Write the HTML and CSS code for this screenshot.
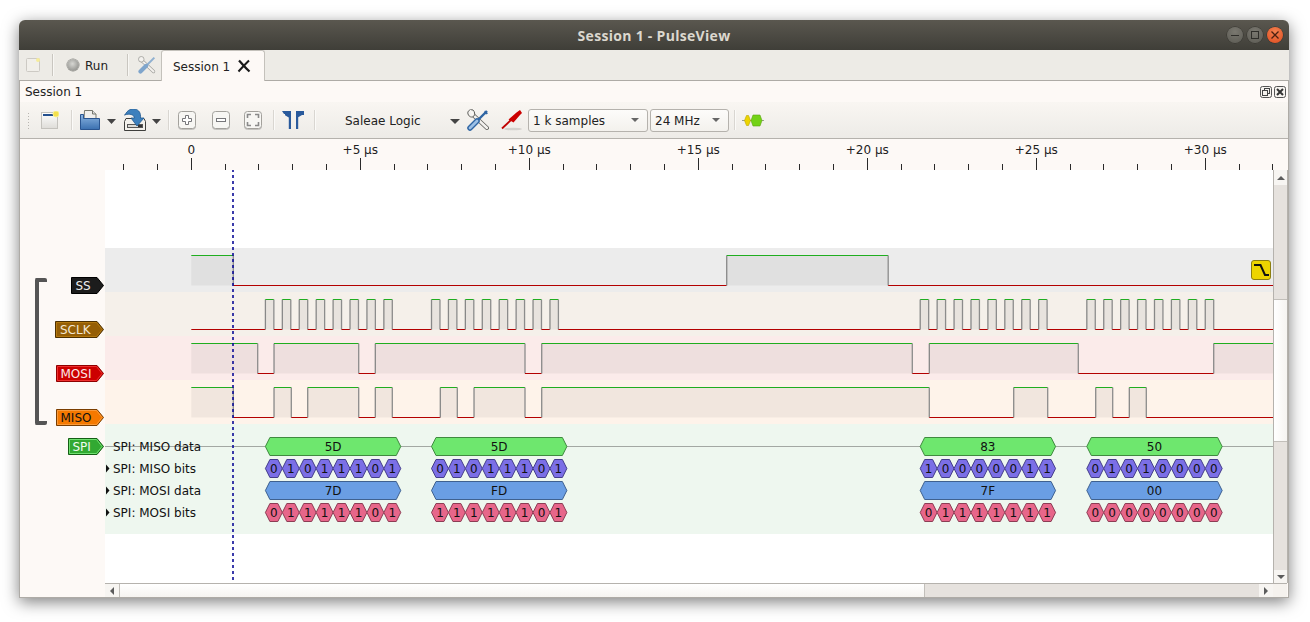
FILE: index.html
```html
<!DOCTYPE html>
<html lang="en">
<head>
    <meta charset="UTF-8">
    <title>Session 1 - PulseView</title>
    <meta name="viewport" content="width=device-width, initial-scale=1.0">
    <link rel="stylesheet" href="styles.css">
</head>
<body>
    <div class="window">
        <div class="titlebar">
            <span class="title">Session 1 - PulseView</span>
            <div class="wm-buttons">
                <span class="wm-btn"><i class="wm-min"></i></span>
                <span class="wm-btn"><i class="wm-max"></i></span>
                <span class="wm-btn wm-close">
                    <svg width="10" height="10" viewBox="0 0 10 10"><path d="M1.5 1.5l7 7M8.5 1.5l-7 7" stroke="#4a2010" stroke-width="1.3"/></svg>
                </span>
            </div>
        </div>

        <div class="tabbar">
            <svg class="tab-new" width="14" height="14" viewBox="0 0 14 14">
                <rect x="0.5" y="0.5" width="13" height="13" rx="1" fill="#f1efea" stroke="#cdcac4"/>
                <circle cx="12" cy="2" r="2" fill="#f6ec9a"/>
            </svg>
            <span class="tab-sep"></span>
            <span class="run-led"></span>
            <span class="run-label">Run</span>
            <span class="tab-sep tab-sep-tight"></span>
            <svg class="tab-tools" width="18" height="18" viewBox="0 0 22 22">
                <path d="M3 4l16 15" stroke="#a0a09c" stroke-width="4" stroke-linecap="round"/>
                <path d="M3 4l16 15" stroke="#f3f1ee" stroke-width="2.4" stroke-linecap="round"/>
                <circle cx="4" cy="4" r="3.4" fill="#f3f1ee" stroke="#a0a09c"/>
                <path d="M20 2l-9 9" stroke="#8fb0d0" stroke-width="2.4"/>
                <path d="M10 12l-7 7" stroke="#7fa5cc" stroke-width="5" stroke-linecap="round"/>
            </svg>
            <div class="tab">
                <span>Session 1</span>
                <svg class="tab-close" width="14" height="14" viewBox="0 0 14 14">
                    <path d="M2 1.5c3 3 6 7 10.500 11" stroke="#1a1a1a" stroke-width="2.300" fill="none"/>
                    <path d="M12 1.500c-3 3-7 7-10.500 11" stroke="#1a1a1a" stroke-width="2" fill="none"/>
                </svg>
            </div>
        </div>

        <div class="dock">
            <div class="dock-title">
                <span>Session 1</span>
                <div class="dock-btns">
                    <svg width="12" height="12" viewBox="0 0 12 12">
                        <rect x="0.500" y="0.500" width="11" height="11" rx="2" fill="#f6f3ef" stroke="#555"/>
                        <rect x="4.500" y="2.500" width="5" height="5" fill="none" stroke="#444"/>
                        <rect x="2.500" y="4.500" width="5" height="5" fill="#f6f3ef" stroke="#444"/>
                    </svg>
                    <svg width="12" height="12" viewBox="0 0 12 12">
                        <rect x="0.500" y="0.500" width="11" height="11" rx="2" fill="#f6f3ef" stroke="#555"/>
                        <path d="M3 3l6 6M9 3l-6 6" stroke="#333" stroke-width="2"/>
                    </svg>
                </div>
            </div>

            <div class="toolbar">
                <span class="grip"></span>
                <svg class="tool-new" width="18" height="18" viewBox="0 0 18 18">
                    <defs><linearGradient id="newbg" x1="0" y1="0" x2="0" y2="1"><stop offset="0" stop-color="#fff"/><stop offset="1" stop-color="#dedcd8"/></linearGradient></defs>
                    <rect x="0.500" y="1.500" width="16" height="16" fill="url(#newbg)" stroke="#c4c2bd"/>
                    <rect x="2" y="3" width="13" height="2" fill="#24508f"/>
                    <circle cx="15" cy="3" r="3" fill="#f4e04d" stroke="#f8f08e"/>
                </svg>
                <span class="tool-sep sep-a"></span>
                <svg class="tool-open" width="20" height="20" viewBox="0 0 20 20">
                    <defs><linearGradient id="folder" x1="0" y1="0" x2="0" y2="1"><stop offset="0" stop-color="#8ab4e0"/><stop offset="1" stop-color="#3a70b0"/></linearGradient></defs>
                    <path d="M4.500 0.500h8l3.500 3.500v6h-12z" fill="#f0efec" stroke="#77786f"/>
                    <path d="M12.500 0.500v3.500h3.500" fill="#ddd" stroke="#77786f"/>
                    <path d="M0.500 4.500h3v4h16v11h-19z" fill="url(#folder)" stroke="#2a5590"/>
                </svg>
                <svg class="drop drop-open" width="9" height="5" viewBox="0 0 9 5"><path d="M0 0h9l-4.500 5z"/></svg>
                <svg class="tool-save" width="22" height="22" viewBox="0 0 22 22">
                    <path d="M2 9.500h18l1.500 3v9h-21v-9z" fill="#f3f1ec" stroke="#3f3f3c"/>
                    <rect x="3.500" y="15.500" width="15" height="3" fill="#dcdbd6" stroke="#555"/>
                    <rect x="14" y="16" width="4" height="2" fill="#333"/>
                    <path d="M1 6C3 1 8-1 11 0c4 1 6 4 5.500 9h3.500l-7 8-6-8h3.500c0-3-5-5-10-3z" fill="#3d80bd" stroke="#20588f" stroke-width="0.800"/>
                </svg>
                <svg class="drop drop-save" width="9" height="5" viewBox="0 0 9 5"><path d="M0 0h9l-4.500 5z"/></svg>
                <span class="tool-sep sep-b"></span>
                <svg class="tool-zoom zoom-in" width="18" height="18" viewBox="0 0 18 18">
                    <rect class="zoom-box" x="0.500" y="0.500" width="17" height="17" rx="3"/>
                    <path class="zoom-mark" d="M7.500 4.500h3v3h3v3h-3v3h-3v-3h-3v-3h3z"/>
                </svg>
                <svg class="tool-zoom zoom-out" width="18" height="18" viewBox="0 0 18 18">
                    <rect class="zoom-box" x="0.500" y="0.500" width="17" height="17" rx="3"/>
                    <rect class="zoom-mark" x="4.500" y="7.500" width="9" height="3"/>
                </svg>
                <svg class="tool-zoom zoom-fit" width="18" height="18" viewBox="0 0 18 18">
                    <rect class="zoom-box" x="0.500" y="0.500" width="17" height="17" rx="3"/>
                    <path class="zoom-mark" d="M3.500 7v-3.500h3.500M11 3.500h3.500v3.500M14.500 11v3.500h-3.500M7 14.500h-3.500v-3.500"/>
                </svg>
                <span class="tool-sep sep-c"></span>
                <svg class="tool-cursors" width="24" height="20" viewBox="0 0 24 20">
                    <path d="M1 1h9v18h-2.200v-11.500l-3.800-2.200v-1.300h-1z" fill="#2a5a9c"/>
                    <path d="M15 1h8v4h-2l-3.800 2.300v11.700h-2.200z" fill="#2a5a9c"/>
                </svg>
                <span class="tool-sep sep-d"></span>
                <div class="device">
                    <span class="ui-text">Saleae Logic</span>
                    <svg class="drop" width="10" height="5" viewBox="0 0 10 5"><path d="M0 0h10l-5 5z"/></svg>
                </div>
                <svg class="tool-conf" width="22" height="22" viewBox="0 0 22 22">
                    <path d="M4 4l16 15" stroke="#5f5f5b" stroke-width="4" stroke-linecap="round"/>
                    <path d="M4 4l16 15" stroke="#f3f1ee" stroke-width="2.4" stroke-linecap="round"/>
                    <path d="M6 1C3 0 0 2 1 5c1 3 4 4 6 2 1-2 1-4-1-6z" fill="#f3f1ee" stroke="#5f5f5b"/>
                    <path d="M3 1l3 3-1 2" fill="#f9f7f3" stroke="#f9f7f3"/>
                    <path d="M20 2l-9 9" stroke="#2f65a3" stroke-width="2.400"/>
                    <path d="M18 1.500l3 3-2 1-2-2z" fill="#2f65a3"/>
                    <path d="M10 12l-7 7" stroke="#2f65a3" stroke-width="5.500" stroke-linecap="round"/>
                    <path d="M10 12l-7 7" stroke="#9cc0e6" stroke-width="2.800" stroke-linecap="round"/>
                </svg>
                <svg class="tool-probe" width="22" height="22" viewBox="0 0 22 22">
                    <ellipse cx="12" cy="20" rx="9" ry="1.300" fill="#d3d1cd"/>
                    <path d="M1 19.500l9-8.500" stroke="#c00000" stroke-width="1.800"/>
                    <path d="M7.500 10.500l8-7 3.500-2.500 2 3-2 2-6.500 7.500z" fill="#cc0000"/>
                </svg>
                <div class="combo combo-samples"><span class="ui-text">1 k samples</span><i class="combo-arrow"></i></div>
                <div class="combo combo-rate"><span class="ui-text">24 MHz</span><i class="combo-arrow"></i></div>
                <span class="tool-sep sep-e"></span>
                <svg class="tool-decoder" width="22" height="14" viewBox="0 0 22 14">
                    <path d="M0 7.500h22" stroke="#9a9f8c"/>
                    <path d="M2.500 7.500l2-5h2l2 5-2 5h-2z" fill="#edd400" stroke="#b8a500" stroke-width="0.600"/>
                    <path d="M9 7.500l2-5.500h7l2 5.500-2 5.500h-7z" fill="#73d216" stroke="#5aa60e" stroke-width="0.600"/>
                </svg>
            </div>

            <div class="view">
                <svg class="ruler" id="ruler" width="1268" height="31" viewBox="20 139 1268 31"></svg>

                <div class="traces">
                    <div class="row row-empty"><div class="row-head"></div><div class="row-body"></div></div>

                    <div class="row row-ss">
                        <div class="row-head">
                            <svg class="flag flag-ss" width="33" height="17" viewBox="0 0 33 17">
                                <polygon class="flag-bg" points="0.500,0.500 26,0.500 32.500,8.500 26,16.500 0.500,16.500"/>
                                <text x="4.500" y="13">SS</text>
                            </svg>
                        </div>
                        <div class="row-body">
                            <svg class="wave" data-signal="ss" width="1168" height="44" viewBox="105 0 1168 44"></svg>
                            <svg class="trigger" width="20" height="20" viewBox="0 0 20 20">
                                <rect x="0.500" y="0.500" width="19" height="19" rx="2.500" fill="#edd400" stroke="#8c7e10"/>
                                <path d="M3 5h6.500l4.500 10h4" fill="none" stroke="#111" stroke-width="2"/>
                            </svg>
                        </div>
                    </div>

                    <div class="row row-sclk">
                        <div class="row-head">
                            <svg class="flag flag-sclk" width="49" height="17" viewBox="0 0 49 17">
                                <polygon class="flag-bg" points="0.500,0.500 42,0.500 48.500,8.500 42,16.500 0.500,16.500"/>
                                <polygon class="flag-in" points="1.500,1.500 41.500,1.500 47,8.500 41.500,15.500 1.500,15.500"/>
                                <text x="5" y="13">SCLK</text>
                            </svg>
                        </div>
                        <div class="row-body"><svg class="wave" data-signal="sclk" width="1168" height="44" viewBox="105 0 1168 44"></svg></div>
                    </div>

                    <div class="row row-mosi">
                        <div class="row-head">
                            <svg class="flag flag-mosi" width="48" height="17" viewBox="0 0 48 17">
                                <polygon class="flag-bg" points="0.500,0.500 41,0.500 47.500,8.500 41,16.500 0.500,16.500"/>
                                <polygon class="flag-in" points="1.500,1.500 40.500,1.500 46,8.500 40.500,15.500 1.500,15.500"/>
                                <text x="4.500" y="13">MOSI</text>
                            </svg>
                        </div>
                        <div class="row-body"><svg class="wave" data-signal="mosi" width="1168" height="44" viewBox="105 0 1168 44"></svg></div>
                    </div>

                    <div class="row row-miso">
                        <div class="row-head">
                            <svg class="flag flag-miso" width="48" height="17" viewBox="0 0 48 17">
                                <polygon class="flag-bg" points="0.500,0.500 41,0.500 47.500,8.500 41,16.500 0.500,16.500"/>
                                <polygon class="flag-in" points="1.500,1.500 40.500,1.500 46,8.500 40.500,15.500 1.500,15.500"/>
                                <text x="4.500" y="13">MISO</text>
                            </svg>
                        </div>
                        <div class="row-body"><svg class="wave" data-signal="miso" width="1168" height="44" viewBox="105 0 1168 44"></svg></div>
                    </div>

                    <div class="row row-spi">
                        <div class="row-head">
                            <svg class="flag flag-spi" width="36" height="17" viewBox="0 0 36 17">
                                <polygon class="flag-bg" points="0.500,0.500 29,0.500 35.500,8.500 29,16.500 0.500,16.500"/>
                                <polygon class="flag-in" points="1.500,1.500 28.500,1.500 34,8.500 28.500,15.500 1.500,15.500"/>
                                <text x="4.500" y="13">SPI</text>
                            </svg>
                        </div>
                        <div class="row-body"><svg class="decoder" id="decoder" width="1168" height="110" viewBox="105 424 1168 110"></svg></div>
                    </div>

                    <div class="row row-fill"><div class="row-head"></div><div class="row-body"></div></div>

                    <!-- group bracket and time cursor sit on top of the rows -->
                    <div class="bracket"></div>
                    <div class="cursor"></div>
                </div>

                <div class="vscroll">
                    <span class="sb-btn"><i class="sb-up"></i></span>
                    <span class="sb-trough trough-top"></span>
                    <span class="sb-handle"></span>
                    <span class="sb-trough trough-bottom"></span>
                    <span class="sb-btn sb-btn-end"><i class="sb-down"></i></span>
                </div>

                <div class="hscroll-pad"></div>
                <div class="hscroll">
                    <span class="sb-btn"><i class="sb-left"></i></span>
                    <span class="sb-handle handle-h"></span>
                    <span class="sb-trough trough-h"></span>
                    <span class="sb-btn sb-btn-end"><i class="sb-right"></i></span>
                </div>
                <div class="sb-corner"></div>
            </div>
        </div>
    </div>
    <script src="app.js"></script>
</body>
</html>
```

FILE: styles.css
```css
html, body {
    margin: 0;
    padding: 0;
    background: #fff;
}
body {
    width: 1310px;
    height: 622px;
    box-sizing: border-box;
    padding: 20px 21px 24px 19px;
    overflow: hidden;
    font-family: "DejaVu Sans", sans-serif;
    font-size: 12px;
    color: #222;
}
svg {
    display: block;
    flex: none;
}
.window {
    height: 578px;
    display: flex;
    flex-direction: column;
    border-radius: 6px 6px 0 0;
    box-shadow: 0 4px 16px rgba(0, 0, 0, 0.5);
    background: #edebe6;
}
.ui-text {
    padding-top: 1px;
}

/* title bar */
.titlebar {
    height: 30px;
    flex: none;
    display: flex;
    align-items: center;
    justify-content: center;
    position: relative;
    border-radius: 6px 6px 0 0;
    background: linear-gradient(180deg, #5a574f 0%, #3f3e38 100%);
}
.title {
    font-family: "Open Sans", sans-serif;
    font-weight: 700;
    font-size: 14px;
    letter-spacing: 0.3px;
    color: #dcd8cf;
}
.wm-buttons {
    position: absolute;
    right: 6px;
    top: 7px;
    display: flex;
    gap: 4px;
}
.wm-btn {
    width: 16px;
    height: 16px;
    border-radius: 50%;
    display: flex;
    align-items: center;
    justify-content: center;
    background: radial-gradient(circle at 50% 30%, #7a7870, #5b5a53);
    box-shadow: 0 0 0 0.5px #33322d;
}
.wm-close {
    background: radial-gradient(circle at 50% 30%, #f3814f, #de4c20);
}
.wm-min {
    width: 8px;
    height: 1px;
    background: #2f2e2a;
}
.wm-max {
    width: 6px;
    height: 6px;
    border: 1px solid #2f2e2a;
}

/* tab bar */
.tabbar {
    height: 30px;
    flex: none;
    display: flex;
    align-items: center;
    padding-left: 7px;
    background: #edebe6;
}
.tab-sep {
    width: 1px;
    height: 22px;
    margin-left: 12px;
    background: #c9c6c0;
    box-shadow: 1px 0 0 #f8f7f4;
}
.tab-sep-tight {
    margin-left: 0;
}
.run-led {
    width: 12px;
    height: 12px;
    margin-left: 14px;
    border-radius: 50%;
    background: radial-gradient(circle at 45% 40%, #d6d6d2, #7e7e7a);
    box-shadow: 0 0 0 0.5px #8a8a86;
}
.run-label {
    width: 42px;
    margin-left: 6px;
    padding-top: 2px;
}
.tab-tools {
    margin-left: 10px;
}
.tab {
    width: 104px;
    height: 31px;
    margin: 0 0 -1px 5px;
    box-sizing: border-box;
    display: flex;
    align-items: center;
    padding: 1px 0 0 11px;
    gap: 7px;
    position: relative;
    background: #fdf9f6;
    border: 1px solid #c4c1bb;
    border-bottom: none;
    border-radius: 3px 3px 0 0;
    z-index: 1;
}
.tab-close {
    margin-top: -1px;
}

/* dock */
.dock {
    flex: 1;
    min-height: 0;
    display: flex;
    flex-direction: column;
    border: 1px solid #aeaba6;
    background: #fdf9f6;
}
.dock-title {
    height: 21px;
    flex: none;
    display: flex;
    align-items: center;
    justify-content: space-between;
    padding: 0 2px 0 5px;
}
.dock-btns {
    display: flex;
    gap: 2px;
}

/* toolbar */
.toolbar {
    height: 36px;
    flex: none;
    display: flex;
    align-items: center;
    padding-left: 7px;
    background: linear-gradient(180deg, #f9f6f2 0%, #edebe7 100%);
    border-bottom: 1px solid #b5b2ad;
}
.grip {
    width: 3px;
    height: 17px;
    background-image: radial-gradient(circle, #b8b5b0 0.6px, transparent 0.8px);
    background-size: 3px 3px;
}
.tool-new { margin-left: 11px; }
.tool-sep {
    width: 1px;
    height: 20px;
    background: #d9d6d1;
    box-shadow: 1px 0 0 #fbfaf8;
}
.sep-a { margin-left: 12px; }
.tool-open { margin-left: 8px; }
.drop {
    fill: #444;
    margin-top: 2px;
}
.drop-open { margin-left: 7px; }
.tool-save { margin-left: 8px; }
.drop-save { margin-left: 6px; }
.sep-b { margin-left: 7px; }
.tool-zoom {
    filter: drop-shadow(0 1px 0 rgba(0, 0, 0, 0.18));
}
.zoom-in { margin-left: 9px; }
.zoom-out { margin-left: 16px; }
.zoom-fit { margin-left: 14px; }
.zoom-box {
    fill: #f7f6f3;
    stroke: #a3a19c;
}
.zoom-mark {
    fill: #fff;
    stroke: #77777a;
}
.zoom-fit .zoom-mark {
    fill: none;
    stroke: #8a8a8a;
    stroke-width: 1.6;
}
.sep-c { margin-left: 11px; }
.tool-cursors { margin-left: 7px; }
.sep-d { margin-left: 9px; }
.device {
    width: 115px;
    margin-left: 30px;
    display: flex;
    align-items: center;
    justify-content: space-between;
}
.tool-conf { margin-left: 7px; }
.tool-probe { margin-left: 12px; }
.combo {
    height: 23px;
    box-sizing: border-box;
    display: flex;
    align-items: center;
    justify-content: space-between;
    padding: 0 8px 0 4px;
    border: 1px solid #b5b2ad;
    border-radius: 3px;
    background: linear-gradient(180deg, #fdfcfa 0%, #f3f1ed 100%);
}
.combo-samples {
    width: 120px;
    margin-left: 5px;
}
.combo-rate {
    width: 79px;
    margin-left: 2px;
}
.combo-arrow {
    width: 0;
    height: 0;
    border-left: 4px solid transparent;
    border-right: 4px solid transparent;
    border-top: 4px solid #666;
}
.sep-e { margin-left: 5px; }
.tool-decoder { margin-left: 7px; }

/* main view */
.view {
    flex: 1;
    min-height: 0;
    display: grid;
    grid-template-columns: 85px 1168px 14px 1px;
    grid-template-rows: 31px 1fr 14px;
}
.ruler {
    grid-column: 1 / -1;
}
.ruler text {
    font-size: 12px;
    fill: #222;
    text-anchor: middle;
}
.traces {
    grid-column: 1 / 3;
    min-height: 0;
    display: flex;
    flex-direction: column;
    position: relative;
}
.row {
    flex: none;
    display: grid;
    grid-template-columns: 85px 1168px;
}
.row-head {
    display: flex;
    justify-content: flex-end;
    padding-right: 1px;
    background: #fdf9f6;
}
.row-body {
    position: relative;
    overflow: hidden;
}
.row-empty { height: 78px; }
.row-empty .row-body,
.row-fill .row-body { background: #fff; }
.row-fill { flex: 1; }
.row-ss, .row-sclk, .row-mosi, .row-miso { height: 44px; }
.row-spi { height: 110px; }
.row-ss .row-body { background: #ececec; }
.row-sclk .row-body { background: #f5f0ea; }
.row-mosi .row-body { background: #fbebea; }
.row-miso .row-body { background: #fef3ea; }
.row-spi .row-body { background: #eef7ef; }

.flag {
    margin-top: 29px;
    position: relative;
    z-index: 1;
    overflow: visible;
}
.flag-spi { margin-top: 14px; }
.flag text {
    font-size: 12px;
}
.flag-ss .flag-bg { fill: #1c1c1c; stroke: #000; }
.flag-ss text { fill: #eee; }
.flag-sclk .flag-bg { fill: #8f5902; stroke: #4d3000; }
.flag-sclk .flag-in { fill: #955e05; stroke: #b3780f; }
.flag-sclk text { fill: #f3e7d3; }
.flag-mosi .flag-bg { fill: #cc0000; stroke: #8f0000; }
.flag-mosi .flag-in { fill: #cc0000; stroke: #ef3030; }
.flag-mosi text { fill: #fbe8e8; }
.flag-miso .flag-bg { fill: #f57900; stroke: #7a3d00; }
.flag-miso .flag-in { fill: #f57900; stroke: #fa9a3a; }
.flag-miso text { fill: #111; }
.flag-spi .flag-bg { fill: #32a932; stroke: #145f14; }
.flag-spi .flag-in { fill: #32a932; stroke: #70e070; }
.flag-spi text { fill: #f0fbf0; }

.high { stroke: #1fae1f; }
.low { stroke: #b30000; }
.edge { stroke: #8c8c8c; stroke-width: 1.3; }
.fill { fill: rgba(0, 0, 0, 0.05); }

.trigger {
    position: absolute;
    right: 2px;
    top: 12px;
}
.decoder text {
    font-size: 12px;
    fill: #111;
}
.decoder .anno {
    text-anchor: middle;
}
.track-line { stroke: #a3a8a3; }
.expand { fill: #111; }
.a-data-miso { fill: #6ee76e; stroke: #3f8a3f; }
.a-bits-miso { fill: #7b6fe6; stroke: #443d8a; }
.a-data-mosi { fill: #6a9ee4; stroke: #3f6190; }
.a-bits-mosi { fill: #e7668a; stroke: #8c3d54; }

.bracket {
    position: absolute;
    left: 15px;
    top: 108px;
    width: 12px;
    height: 147px;
    box-sizing: border-box;
    border: 4px solid #555;
    border-right: none;
    border-radius: 2px;
}
.cursor {
    position: absolute;
    left: 232px;
    margin-left: -20px;
    top: 0;
    bottom: 2px;
    width: 2px;
    background: linear-gradient(180deg, rgba(10, 10, 150, 0.8) 0 3.5px, transparent 3.5px 6px) 0 5px / 100% 6px;
}

/* scrollbars */
.vscroll, .hscroll {
    display: flex;
    background: #e6e2de;
}
.vscroll {
    flex-direction: column;
    box-sizing: border-box;
    border-left: 1px solid #b5b2ad;
    border-right: 1px solid #b5b2ad;
    width: 15px;
    margin-right: -1px;
}
.hscroll-pad {
    grid-column: 1;
    background: #fdf9f6;
}
.hscroll {
    grid-column: 2;
    border-top: 1px solid #b5b2ad;
}
.sb-corner {
    grid-column: 3;
    border-top: 1px solid #b5b2ad;
    background: #f5f2ee;
}
.sb-btn {
    flex: none;
    width: 13px;
    height: 15px;
    display: flex;
    align-items: center;
    justify-content: center;
    background: #f7f5f2;
}
.vscroll .sb-btn-end { height: 13px; }
.hscroll .sb-btn { width: 14px; height: auto; }
.sb-up, .sb-down, .sb-left, .sb-right {
    width: 0;
    height: 0;
    border: 4px solid transparent;
}
.sb-up { border-bottom-color: #5c5c5c; border-top-width: 0; }
.sb-down { border-top-color: #5c5c5c; border-bottom-width: 0; }
.sb-right { border-left-color: #5c5c5c; border-right-width: 0; }
.sb-left { border-right-color: #5c5c5c; border-left-width: 0; }
.sb-handle {
    flex: none;
    height: 143px;
    background: linear-gradient(90deg, #fff 0%, #f6f4f1 100%);
    border-top: 1px solid #c2bfba;
    border-bottom: 1px solid #c2bfba;
    box-sizing: border-box;
}
.handle-h {
    width: 806px;
    height: auto;
    background: linear-gradient(180deg, #fff 0%, #f6f4f1 100%);
    border: none;
    border-left: 1px solid #c2bfba;
    border-right: 1px solid #c2bfba;
}
.trough-top { height: 114px; flex: none; }
.trough-bottom { flex: 1; }
.trough-h { flex: 1; }
```

FILE: app.js
```js
// time scale of the trace view, x values are page pixels
const X0 = 191.3;
const PX_US = 33.8;
const VIEW_END = 1273;
const BIT_W = 16.92;

const GROUPS = [265.4, 431.5, 920.2, 1086.8];

// sclk pulses are half a bit wide, 8 per group
function clockEdges() {
    const edges = [];
    GROUPS.forEach(function(start) {
        for (let i = 0; i < 16; i++) edges.push(start + i * BIT_W / 2);
    });
    return edges;
}

// first level plus the x of each transition
const SIGNALS = {
    ss: { high: true, edges: [233.3, 726.7, 888.2] },
    sclk: { high: false, edges: clockEdges() },
    mosi: { high: true, edges: [257.7, 274, 358.7, 375.3, 525, 541.7, 912.3, 929.3, 1078.3, 1213.7] },
    miso: { high: true, edges: [233.3, 274, 291.3, 307.7, 358.7, 375.3, 392.3, 440.3, 457.3, 474, 525, 541.7, 929.3, 1013.7, 1047.7, 1095.7, 1112.7, 1129.3, 1146.3] }
};

function drawWave(svg, sig) {
    const hi = 7.5, lo = 37.5;
    let out = '';
    let level = sig.high;
    let from = X0;
    sig.edges.concat([VIEW_END]).forEach(function(x, i) {
        if (level) {
            out += `<rect class="fill" x="${from}" y="${hi}" width="${x - from}" height="${lo - hi}"/>`;
        }
        const y = level ? hi : lo;
        out += `<path class="${level ? 'high' : 'low'}" d="M${from} ${y}H${x}"/>`;
        if (i < sig.edges.length) {
            out += `<path class="edge" d="M${x} ${hi}V${lo}"/>`;
        }
        level = !level;
        from = x;
    });
    svg.innerHTML = out;
}

function drawRuler(svg) {
    let out = '';
    for (let i = -2; ; i++) {
        const x = X0 + i * PX_US;
        if (x > VIEW_END + 1) break;
        const major = i % 5 === 0;
        const px = Math.floor(x) + 0.5;
        out += `<path d="M${px} ${major ? 158 : 164}V170" stroke="#2a2a2a"/>`;
        if (major && i >= 0) {
            const label = i === 0 ? '0' : `+${i} µs`;
            out += `<text x="${x}" y="154">${label}</text>`;
        }
    }
    svg.innerHTML = out;
}

function hexShape(cls, x, w, cy) {
    const t = 4.5, h = 9;
    const pts = [[x, cy], [x + t, cy - h], [x + w - t, cy - h], [x + w, cy], [x + w - t, cy + h], [x + t, cy + h]];
    return `<polygon class="${cls}" points="${pts.map(p => p.join(',')).join(' ')}"/>`;
}

function drawDecoder(svg) {
    const rows = [
        { label: 'SPI: MISO data', cls: 'a-data-miso', cy: 446.5, words: ['5D', '5D', '83', '50'] },
        { label: 'SPI: MISO bits', cls: 'a-bits-miso', cy: 468.5, bits: ['01011101', '01011101', '10000011', '01010000'] },
        { label: 'SPI: MOSI data', cls: 'a-data-mosi', cy: 490.5, words: ['7D', 'FD', '7F', '00'] },
        { label: 'SPI: MOSI bits', cls: 'a-bits-mosi', cy: 512.5, bits: ['01111101', '11111101', '01111111', '00000000'] }
    ];
    const wordW = BIT_W * 8;
    let out = `<path class="track-line" d="M105 446.5H${VIEW_END}"/>`;
    rows.forEach(function(row, r) {
        if (r > 0) {
            out += `<path class="expand" d="M106 ${row.cy - 4}l3.500 4-3.500 4z"/>`;
        }
        out += `<text x="113" y="${row.cy + 4.5}">${row.label}</text>`;
        GROUPS.forEach(function(start, g) {
            if (row.words) {
                out += hexShape(row.cls, start, wordW, row.cy);
                out += `<text class="anno" x="${start + wordW / 2}" y="${row.cy + 4.5}">${row.words[g]}</text>`;
            } else {
                row.bits[g].split('').forEach(function(bit, b) {
                    const x = start + b * BIT_W;
                    out += hexShape(row.cls, x, BIT_W, row.cy);
                    out += `<text class="anno" x="${x + BIT_W / 2}" y="${row.cy + 4.5}">${bit}</text>`;
                });
            }
        });
    });
    svg.innerHTML = out;
}

document.querySelectorAll('.wave').forEach(function(svg) {
    drawWave(svg, SIGNALS[svg.dataset.signal]);
});
drawRuler(document.getElementById('ruler'));
drawDecoder(document.getElementById('decoder'));
```
